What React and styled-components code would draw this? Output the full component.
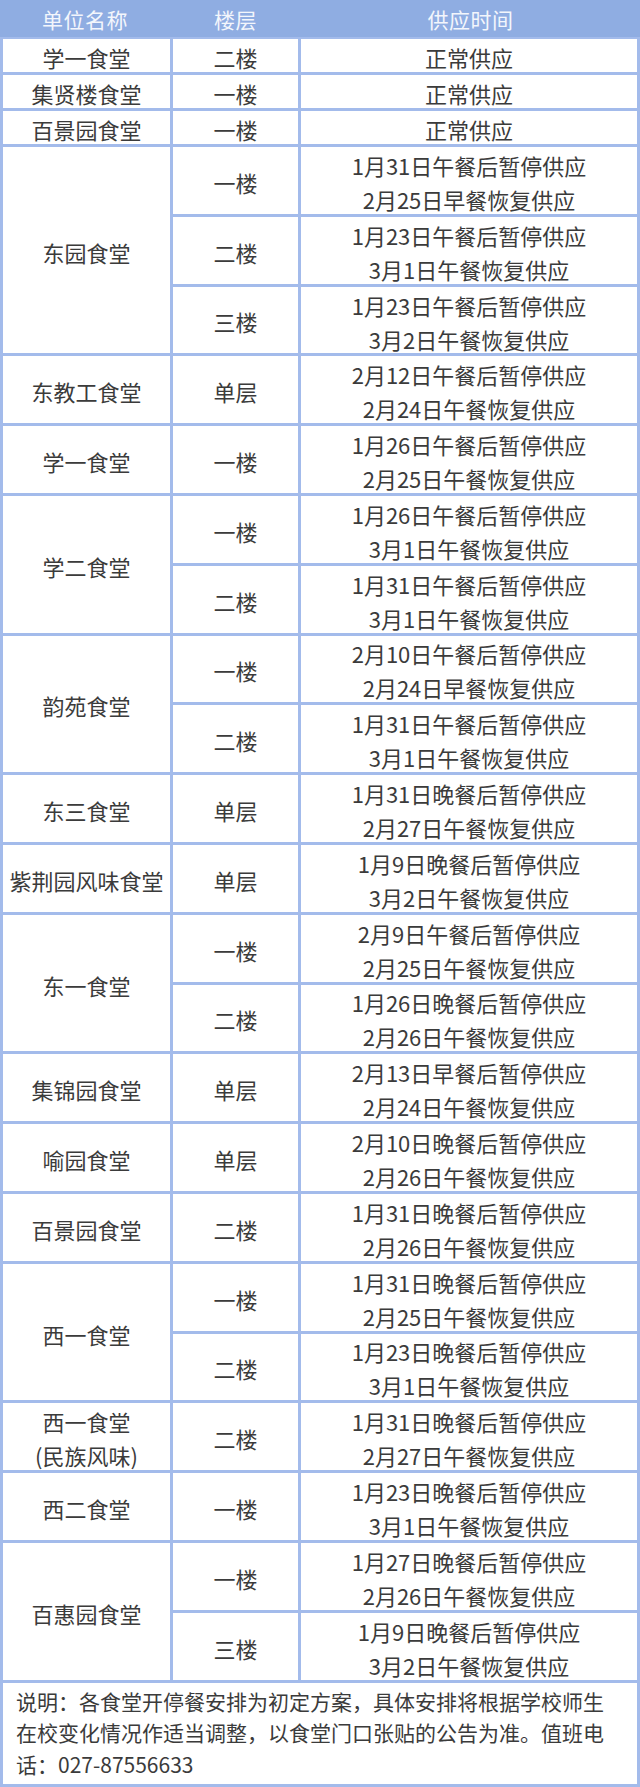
import React from 'react'
import styled, { createGlobalStyle } from 'styled-components'

const schedule = [
  { name: ['学一食堂'], floors: [['二楼', ['正常供应']]] },
  { name: ['集贤楼食堂'], floors: [['一楼', ['正常供应']]] },
  { name: ['百景园食堂'], floors: [['一楼', ['正常供应']]] },
  {
    name: ['东园食堂'],
    floors: [
      ['一楼', ['1月31日午餐后暂停供应', '2月25日早餐恢复供应']],
      ['二楼', ['1月23日午餐后暂停供应', '3月1日午餐恢复供应']],
      ['三楼', ['1月23日午餐后暂停供应', '3月2日午餐恢复供应']],
    ],
  },
  { name: ['东教工食堂'], floors: [['单层', ['2月12日午餐后暂停供应', '2月24日午餐恢复供应']]] },
  { name: ['学一食堂'], floors: [['一楼', ['1月26日午餐后暂停供应', '2月25日午餐恢复供应']]] },
  {
    name: ['学二食堂'],
    floors: [
      ['一楼', ['1月26日午餐后暂停供应', '3月1日午餐恢复供应']],
      ['二楼', ['1月31日午餐后暂停供应', '3月1日午餐恢复供应']],
    ],
  },
  {
    name: ['韵苑食堂'],
    floors: [
      ['一楼', ['2月10日午餐后暂停供应', '2月24日早餐恢复供应']],
      ['二楼', ['1月31日午餐后暂停供应', '3月1日午餐恢复供应']],
    ],
  },
  { name: ['东三食堂'], floors: [['单层', ['1月31日晚餐后暂停供应', '2月27日午餐恢复供应']]] },
  { name: ['紫荆园风味食堂'], floors: [['单层', ['1月9日晚餐后暂停供应', '3月2日午餐恢复供应']]] },
  {
    name: ['东一食堂'],
    floors: [
      ['一楼', ['2月9日午餐后暂停供应', '2月25日午餐恢复供应']],
      ['二楼', ['1月26日晚餐后暂停供应', '2月26日午餐恢复供应']],
    ],
  },
  { name: ['集锦园食堂'], floors: [['单层', ['2月13日早餐后暂停供应', '2月24日午餐恢复供应']]] },
  { name: ['喻园食堂'], floors: [['单层', ['2月10日晚餐后暂停供应', '2月26日午餐恢复供应']]] },
  { name: ['百景园食堂'], floors: [['二楼', ['1月31日晚餐后暂停供应', '2月26日午餐恢复供应']]] },
  {
    name: ['西一食堂'],
    floors: [
      ['一楼', ['1月31日晚餐后暂停供应', '2月25日午餐恢复供应']],
      ['二楼', ['1月23日晚餐后暂停供应', '3月1日午餐恢复供应']],
    ],
  },
  { name: ['西一食堂', '(民族风味)'], floors: [['二楼', ['1月31日晚餐后暂停供应', '2月27日午餐恢复供应']]] },
  { name: ['西二食堂'], floors: [['一楼', ['1月23日晚餐后暂停供应', '3月1日午餐恢复供应']]] },
  {
    name: ['百惠园食堂'],
    floors: [
      ['一楼', ['1月27日晚餐后暂停供应', '2月26日午餐恢复供应']],
      ['三楼', ['1月9日晚餐后暂停供应', '3月2日午餐恢复供应']],
    ],
  },
]

// one track per floor row: single-line rows are short, two-line rows tall
const rowTracks = schedule
  .flatMap((unit) => unit.floors.map(([, times]) => (times.length > 1 ? '66.8px' : '33px')))
  .concat('1fr')
  .join(' ')

function App () {
  return (
    <>
      <GlobalStyle />
      <Sheet>
        <Header>
          <HeadCell>单位名称</HeadCell>
          <HeadCell>楼层</HeadCell>
          <HeadCell>供应时间</HeadCell>
        </Header>
        <Grid $rows={rowTracks}>
          {schedule.map((unit, i) => (
            <React.Fragment key={i}>
              <NameCell $span={unit.floors.length}>
                {unit.name.map((line) => <Line key={line}>{line}</Line>)}
              </NameCell>
              {unit.floors.map(([floor, times]) => (
                <React.Fragment key={floor}>
                  <FloorCell>{floor}</FloorCell>
                  <TimeCell>
                    {times.map((t) => <Line key={t}>{t}</Line>)}
                  </TimeCell>
                </React.Fragment>
              ))}
            </React.Fragment>
          ))}
          <Note>
            说明：各食堂开停餐安排为初定方案，具体安排将根据学校师生在校变化情况作适当调整，以食堂门口张贴的公告为准。值班电话：027-87556633
          </Note>
        </Grid>
      </Sheet>
    </>
  )
}

export default App

const GlobalStyle = createGlobalStyle`
  html, body {
    margin: 0;
    padding: 0;
    background: #ffffff;
  }
  body {
    font-family: "Noto Sans CJK SC", "Noto Sans", sans-serif;
  }
`

const Sheet = styled.div`
  width: 640px;
  height: 1787px;
  background: #a3bbeb;
  display: flex;
  flex-direction: column;
`

const Header = styled.div`
  display: grid;
  grid-template-columns: 170px 131px 1fr;
  flex: 0 0 37px;
  background: #8fade2;
`

const HeadCell = styled.div`
  display: flex;
  align-items: center;
  justify-content: center;
  color: #f3f6fc;
  font-size: 21px;
  letter-spacing: 0.5px;
`

const Grid = styled.div`
  flex: 1;
  min-height: 0;
  display: grid;
  grid-template-columns: 167px 125px 1fr;
  grid-template-rows: ${(p) => p.$rows};
  gap: 3px;
  padding: 2px 3px 3px;
`

const Cell = styled.div`
  background: #ffffff;
  color: #3b3b3b;
  display: flex;
  flex-direction: column;
  align-items: center;
  justify-content: center;
  font-size: 22px;
  line-height: 34px;
  padding-top: 3px;
  min-height: 0;
  overflow: visible;
  box-sizing: border-box;
`

const NameCell = styled(Cell)`
  grid-column: 1;
  grid-row: span ${(p) => p.$span};
`

const FloorCell = styled(Cell)`
  grid-column: 2;
`

const TimeCell = styled(Cell)`
  grid-column: 3;
`

const Line = styled.div`
  white-space: nowrap;
`

const Note = styled.div`
  grid-column: 1 / -1;
  background: #ffffff;
  color: #3b3b3b;
  font-size: 21px;
  line-height: 31.5px;
  min-height: 0;
  box-sizing: border-box;
  padding: 3px 18px 0 13px;
`
